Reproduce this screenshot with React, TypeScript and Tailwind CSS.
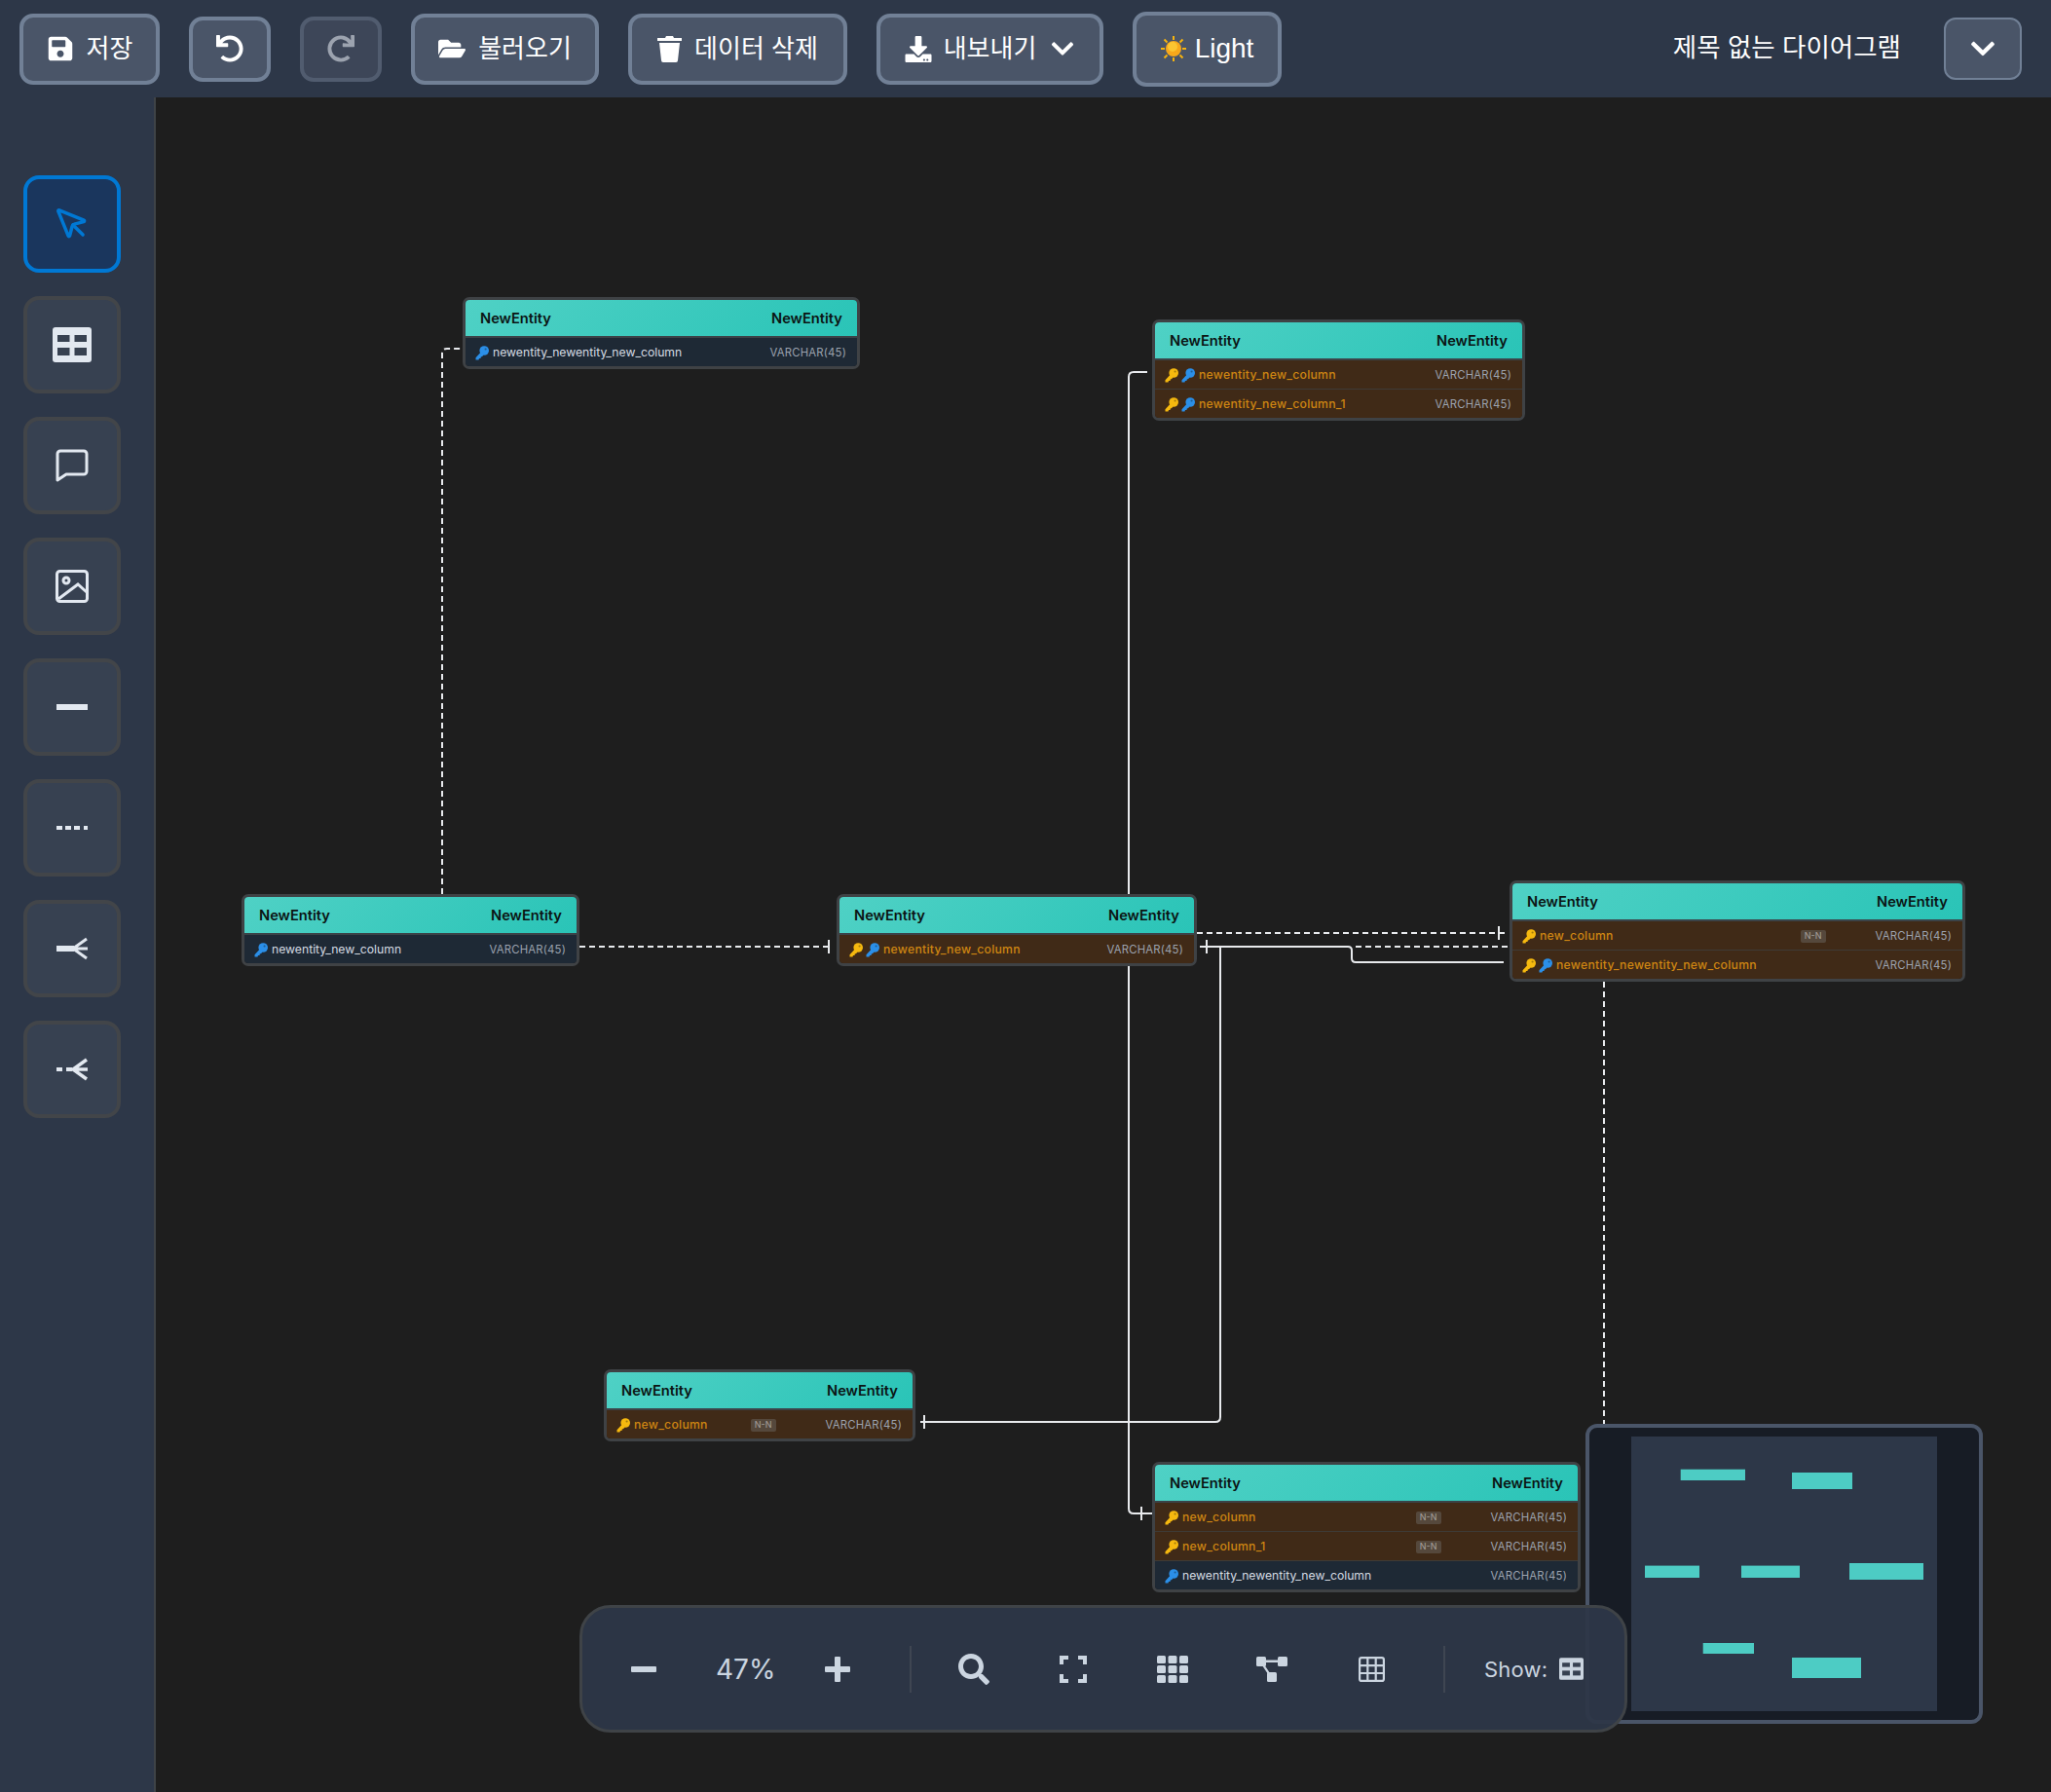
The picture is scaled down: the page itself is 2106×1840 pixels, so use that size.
import type { ReactNode } from "react";
import {
  FaChevronDown,
  FaDownload,
  FaFolderOpen,
  FaRedo,
  FaSave,
  FaSearch,
  FaUndo,
} from "react-icons/fa";
import { MousePointer } from "lucide-react";

type Column = {
  name: string;
  pk?: boolean;
  fk?: boolean;
  nn?: boolean;
};

const columnsA: Column[] = [{ name: "newentity_newentity_new_column", fk: true }];
const columnsB: Column[] = [
  { name: "newentity_new_column", pk: true, fk: true },
  { name: "newentity_new_column_1", pk: true, fk: true },
];
const columnsC: Column[] = [{ name: "newentity_new_column", pk: true, fk: true }];
const columnsD: Column[] = [
  { name: "new_column", pk: true, nn: true },
  { name: "newentity_newentity_new_column", pk: true, fk: true },
];
const columnsE: Column[] = [{ name: "newentity_new_column", fk: true }];
const columnsF: Column[] = [{ name: "new_column", pk: true, nn: true }];
const columnsG: Column[] = [
  { name: "new_column", pk: true, nn: true },
  { name: "new_column_1", pk: true, nn: true },
  { name: "newentity_newentity_new_column", fk: true },
];

function KeyIcon({ color }: { color: string }) {
  return (
    <svg viewBox="0 0 14 15" className="h-[15px] w-[14px] shrink-0">
      <circle cx="9.200" cy="5" r="4.800" fill={color} />
      <path d="M6.500 5.800 0.500 12.300v2.200h3l.5-1.500h1.500l.3-1.500 1.500-.4L9 8.500Z" fill={color} />
      <circle cx="10.600" cy="3.500" r="1.100" fill="#00000055" />
    </svg>
  );
}

function EntityTable({ className, columns }: { className: string; columns: Column[] }) {
  return (
    <div
      className={`absolute overflow-hidden rounded-[7px] border-[3px] border-[#3f4245] font-['Inter',sans-serif] ${className}`}
    >
      <div className="flex h-[39px] items-center justify-between border-b-2 border-[#3b4348] bg-[linear-gradient(135deg,#4fd1c5,#2ac4b7)] px-[15px] pt-[1px] text-[14.7px] font-semibold text-[#0b1413]">
        <span>NewEntity</span>
        <span>NewEntity</span>
      </div>
      {columns.map((col, i) => {
        const last = i === columns.length - 1;
        return (
          <div
            key={col.name}
            className={`flex items-center pl-[10px] pr-[11px] pt-[1px] text-[12.2px] ${
              last ? "h-[29px]" : "h-[30px] border-b border-[#3e3a36]"
            } ${col.pk ? "bg-[#402a17]" : "bg-[#1e2935]"}`}
          >
            {col.pk && (
              <span className={col.fk ? "mr-[3px]" : "mr-[4px]"}>
                <KeyIcon color="#f6b90f" />
              </span>
            )}
            {col.fk && (
              <span className="mr-[4px]">
                <KeyIcon color="#2b8fe8" />
              </span>
            )}
            <span className={`flex-1 ${col.pk ? "font-medium tracking-[0.27px] text-[#cf8612]" : "text-[#d5dbe3]"}`}>
              {col.name}
            </span>
            {col.nn && (
              <span className="mr-[51px] flex h-[13px] w-[26px] items-center justify-center rounded-[2px] bg-[#55483c] text-[9px] text-[#a8a29e]">
                N-N
              </span>
            )}
            <span className="text-[11.3px] tracking-[0.2px] text-[#9ca3af]">VARCHAR(45)</span>
          </div>
        );
      })}
    </div>
  );
}

function TopButton({
  className,
  children,
  dim,
}: {
  className: string;
  children: ReactNode;
  dim?: boolean;
}) {
  return (
    <button
      className={`flex shrink-0 items-center justify-center rounded-[14px] border-4 ${
        dim ? "border-[#515c6f] bg-[#3d4658] text-[#9ca3af]" : "border-[#718096] bg-[#4a5568] text-white"
      } ${className}`}
    >
      {children}
    </button>
  );
}

function SideButton({ children, active }: { children: ReactNode; active?: boolean }) {
  return (
    <button
      className={`flex h-[100px] w-[100px] items-center justify-center rounded-[16px] border-4 ${
        active ? "border-[#0078d4] bg-[#1a365d]" : "border-[#424549] bg-[#374151]"
      }`}
    >
      {children}
    </button>
  );
}

function TableGlyph({ className }: { className: string }) {
  return (
    <svg viewBox="0 0 40 36" className={className}>
      <rect width="40" height="36" rx="3" fill="currentColor" />
      <rect x="5" y="8" width="12.500" height="7" fill="#374151" />
      <rect x="22.500" y="8" width="12.500" height="7" fill="#374151" />
      <rect x="5" y="21" width="12.500" height="8" fill="#374151" />
      <rect x="22.500" y="21" width="12.500" height="8" fill="#374151" />
    </svg>
  );
}

function ToolSlot({ children }: { children: ReactNode }) {
  return <div className="flex h-[40px] w-[102px] items-center justify-center text-[#cbd5e0]">{children}</div>;
}

const minimapRects = [
  [1725.7, 1508.7, 66.3, 11.3],
  [1840, 1512, 62, 17],
  [1689, 1607.6, 56, 12.4],
  [1788, 1607.6, 60, 12.4],
  [1899, 1605, 76, 17],
  [1748.7, 1687, 52.3, 11],
  [1840, 1702, 71, 21],
];

export default function App() {
  return (
    <div className="flex h-screen w-full flex-col overflow-hidden bg-[#1e1e1e] font-['Liberation_Sans','Noto_Sans_CJK_KR',sans-serif]">
      {/* Header */}
      <header className="flex h-[100px] shrink-0 items-center gap-[30px] bg-[#2d3748] pl-[20px] pr-[30px]">
        <TopButton className="h-[73px] w-[144px] gap-[13px] text-[26px]">
          <FaSave className="h-[28px] w-[28px]" />
          <span>저장</span>
        </TopButton>
        <TopButton className="h-[67px] w-[84px]">
          <FaUndo className="h-[28px] w-[28px]" />
        </TopButton>
        <TopButton dim className="h-[67px] w-[84px]">
          <FaRedo className="h-[28px] w-[28px]" />
        </TopButton>
        <TopButton className="h-[73px] w-[193px] gap-[13px] text-[26px]">
          <FaFolderOpen className="h-[26px] w-[28px]" />
          <span>불러오기</span>
        </TopButton>
        <TopButton className="h-[73px] w-[225px] gap-[13px] text-[26px]">
          <svg viewBox="0 0 25 27" className="h-[27px] w-[25px]" fill="currentColor">
            <path d="M9 0h7l1 2h8v3H0V2h8Z" />
            <path d="M2 7h21l-2 18a2 2 0 0 1-2 2H6a2 2 0 0 1-2-2Z" />
          </svg>
          <span>데이터 삭제</span>
        </TopButton>
        <TopButton className="h-[73px] w-[233px] gap-[12px] text-[26px]">
          <FaDownload className="h-[27px] w-[28px]" />
          <span>내보내기</span>
          <FaChevronDown className="ml-[2px] h-[26px] w-[26px]" />
        </TopButton>
        <TopButton className="h-[77px] w-[153px] gap-[9px] text-[28px]">
          <svg viewBox="0 0 26 26" className="h-[26px] w-[26px]">
            <g stroke="#f6b40e" strokeWidth="2">
              <path d="M13 0v4M13 22v4M0 13h4M22 13h4M3.500 3.500l3 3M19.500 19.500l3 3M22.500 3.500l-3 3M6.500 19.500l-3 3" />
            </g>
            <circle cx="13" cy="13" r="8" fill="#f7a81b" />
            <circle cx="12" cy="11" r="5" fill="#fbc531" />
          </svg>
          <span>Light</span>
        </TopButton>
        <span className="ml-auto text-[26.5px] text-white">제목 없는 다이어그램</span>
        <button className="ml-[14px] flex h-[64px] w-[80px] items-center justify-center rounded-[12px] border-2 border-[#718096] bg-[#4a5568] text-white">
          <FaChevronDown className="h-[28px] w-[28px]" />
        </button>
      </header>

      <div className="flex min-h-0 flex-1">
        {/* Tool rail */}
        <aside className="flex w-[160px] shrink-0 flex-col items-start gap-6 border-r-2 border-[#3f4347] bg-[#2d3748] pl-6 pt-[80px] text-[#e2e8f0]">
          <SideButton active>
            <MousePointer className="h-[38px] w-[38px] text-[#0078d4]" strokeWidth={2.2} />
          </SideButton>
          <SideButton>
            <TableGlyph className="h-[36px] w-[40px]" />
          </SideButton>
          <SideButton>
            <svg viewBox="0 0 34 34" className="h-[34px] w-[34px]" fill="none" stroke="currentColor" strokeWidth="3">
              <path d="M2 5a3 3 0 0 1 3-3h24a3 3 0 0 1 3 3v18a3 3 0 0 1-3 3H11l-9 6Z" strokeLinejoin="round" />
            </svg>
          </SideButton>
          <SideButton>
            <svg viewBox="0 0 34 34" className="h-[34px] w-[34px]" fill="none" stroke="currentColor" strokeWidth="3">
              <rect x="1.500" y="1.500" width="31" height="31" rx="3" />
              <circle cx="11" cy="11" r="3" />
              <path d="M3 30 23 15l9 8" />
            </svg>
          </SideButton>
          <SideButton>
            <svg viewBox="0 0 32 6" className="h-[6px] w-[32px]" fill="currentColor">
              <rect width="32" height="6" />
            </svg>
          </SideButton>
          <SideButton>
            <svg viewBox="0 0 32 4" className="h-[4px] w-[32px]" fill="currentColor">
              <rect width="6" height="4" />
              <rect x="9" width="6" height="4" />
              <rect x="18" width="6" height="4" />
              <rect x="28" width="4" height="4" />
            </svg>
          </SideButton>
          <SideButton>
            <svg viewBox="0 0 32 24" className="h-[24px] w-[32px]" fill="none" stroke="currentColor">
              <path d="M0 12h18" strokeWidth="6" />
              <path d="M31 2 17 12l14 10M18 12h14" strokeWidth="3" />
            </svg>
          </SideButton>
          <SideButton>
            <svg viewBox="0 0 32 24" className="h-[24px] w-[32px]" fill="none" stroke="currentColor">
              <path d="M0 12h6M10 12h6" strokeWidth="4" />
              <path d="M31 2 17 12l14 10M18 12h14" strokeWidth="3.500" />
            </svg>
          </SideButton>
        </aside>

        {/* Canvas */}
        <main className="relative min-w-0 flex-1 overflow-hidden bg-[#1e1e1e]">
          <svg viewBox="160 100 1946 1740" className="absolute inset-0 h-full w-full" fill="none" stroke="#e8eaed">
            <g strokeWidth="2" strokeDasharray="6 4">
              <path d="M454 918V363q0-5 5-5h16" />
              <path d="M595 972h258" />
              <path d="M1229 958h316" />
              <path d="M1392 972h158" />
              <path d="M1647 1008v454" />
            </g>
            <g strokeWidth="2">
              <path d="M1178 382h-14q-5 0-5 5V1549q0 5 5 5h19" />
              <path d="M1232 972h152q4 0 4 4v8q0 4 4 4h152" />
              <path d="M1253 972V1455q0 5-5 5H945" />
              <path d="M851 965v14M1239 965v14M1539 951v14M949 1453v14M1172 1547v14" />
            </g>
          </svg>

          <EntityTable className="left-[315px] top-[205px] w-[408px]" columns={columnsA} />
          <EntityTable className="left-[1023px] top-[228px] w-[383px]" columns={columnsB} />
          <EntityTable className="left-[699px] top-[818px] w-[370px]" columns={columnsC} />
          <EntityTable className="left-[1390px] top-[804px] w-[468px]" columns={columnsD} />
          <EntityTable className="left-[88px] top-[818px] w-[347px]" columns={columnsE} />
          <EntityTable className="left-[460px] top-[1306px] w-[320px]" columns={columnsF} />
          <EntityTable className="left-[1023px] top-[1401px] w-[440px]" columns={columnsG} />

          {/* Minimap */}
          <div className="absolute left-[1468px] top-[1362px] h-[308px] w-[408px] overflow-hidden rounded-[12px] border-4 border-[#4a5568] bg-[#171c25]">
            <svg viewBox="1632 1466 400 300" className="h-full w-full">
              <rect x="1675" y="1475" width="314" height="282" fill="#2d3748" />
              {minimapRects.map(([x, y, w, h]) => (
                <rect key={`${x}-${y}`} x={x} y={y} width={w} height={h} fill="#4dccc4" />
              ))}
            </svg>
          </div>

          {/* Bottom toolbar */}
          <div className="absolute left-[435px] top-[1548px] flex h-[131px] w-[1076px] items-center rounded-[32px] border-[3px] border-[#3f4347] bg-[#2d3748]/95 pl-[50px] font-['Inter',sans-serif] text-[#cbd5e0]">
            <div className="h-[6px] w-[26px] rounded-[1px] bg-[#cbd5e0]" />
            <span className="ml-[61px] w-[60px] text-[28px] leading-none">47%</span>
            <svg viewBox="0 0 26 26" className="ml-[52px] h-[26px] w-[26px]" fill="currentColor">
              <rect y="10" width="26" height="6" rx="1" />
              <rect x="10" width="6" height="26" rx="1" />
            </svg>
            <div className="ml-[61px] h-[48px] w-[2px] bg-[#3f4652]" />
            <div className="ml-[13px] flex">
              <ToolSlot>
                <FaSearch className="h-[32px] w-[32px]" />
              </ToolSlot>
              <ToolSlot>
                <svg viewBox="0 0 28 28" className="h-[28px] w-[28px]" fill="none" stroke="currentColor" strokeWidth="4">
                  <path d="M2 9V2h7M19 2h7v7M26 19v7h-7M9 26H2v-7" />
                </svg>
              </ToolSlot>
              <ToolSlot>
                <svg viewBox="0 0 32 28" className="h-[28px] w-[32px]" fill="currentColor">
                  <rect width="9" height="8" rx="1.500" />
                  <rect x="11.500" width="9" height="8" rx="1.500" />
                  <rect x="23" width="9" height="8" rx="1.500" />
                  <rect y="10" width="9" height="8" rx="1.500" />
                  <rect x="11.500" y="10" width="9" height="8" rx="1.500" />
                  <rect x="23" y="10" width="9" height="8" rx="1.500" />
                  <rect y="20" width="9" height="8" rx="1.500" />
                  <rect x="11.500" y="20" width="9" height="8" rx="1.500" />
                  <rect x="23" y="20" width="9" height="8" rx="1.500" />
                </svg>
              </ToolSlot>
              <ToolSlot>
                <svg viewBox="0 0 32 26" className="h-[26px] w-[32px]" fill="currentColor">
                  <rect width="10" height="10" rx="1.500" />
                  <rect x="22" width="10" height="10" rx="1.500" />
                  <rect x="11" y="16" width="10" height="10" rx="1.500" />
                  <path d="M9 3.500h14v2.500H9ZM6 9l2-1 6 9-2 1Z" />
                </svg>
              </ToolSlot>
              <ToolSlot>
                <svg viewBox="0 0 27 26" className="h-[26px] w-[27px]" fill="none" stroke="currentColor" strokeWidth="2.200">
                  <rect x="1.100" y="1.100" width="24.800" height="23.800" rx="2" />
                  <path d="M9.300 1v24M17.700 1v24M1 9.100h25M1 17h25" />
                </svg>
              </ToolSlot>
            </div>
            <div className="ml-[23px] h-[48px] w-[2px] bg-[#3f4652]" />
            <span className="ml-[40px] text-[22px] leading-none tracking-[0.2px]">Show:</span>
            <TableGlyph className="ml-[12px] h-[23px] w-[25px]" />
          </div>
        </main>
      </div>
    </div>
  );
}
